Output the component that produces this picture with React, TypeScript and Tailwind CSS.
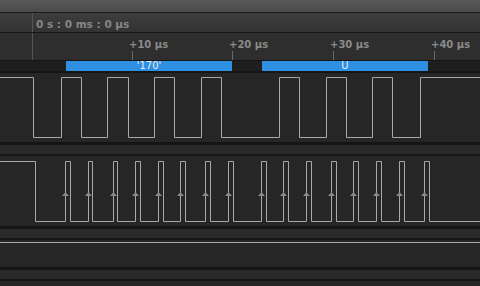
import React from "react";

const font = { fontFamily: '"DejaVu Sans", Verdana, sans-serif' };

// channel 1 edges (x positions where level toggles), starting high
const ch1Edges = [33, 61, 81, 107, 128, 154, 174, 201, 221, 279, 299, 326, 346, 372, 392, 420];
// clock pulses (rising, falling)
const clk: [number, number][] = [
  [65, 70], [88, 92], [113, 117], [135, 140], [158, 163], [180, 185], [205, 210], [228, 233],
  [261, 266], [283, 288], [306, 311], [331, 336], [353, 358], [376, 381], [399, 404], [424, 429],
];

function ch1Path(hi: number, lo: number) {
  let level = true;
  let d = `M0 ${hi}`;
  for (const x of ch1Edges) {
    const y = level ? hi : lo;
    const ny = level ? lo : hi;
    d += ` L${x + 0.5} ${y} L${x + 0.5} ${ny}`;
    level = !level;
  }
  d += ` L480 ${level ? hi : lo}`;
  return d;
}

function clkPath(hi: number, lo: number) {
  let d = `M0 ${hi} L35.5 ${hi} L35.5 ${lo}`;
  for (const [r, f] of clk) {
    d += ` L${r + 0.5} ${lo} L${r + 0.5} ${hi} L${f + 0.5} ${hi} L${f + 0.5} ${lo}`;
  }
  d += ` L480 ${lo}`;
  return d;
}

function Sep() {
  return (
    <div className="flex flex-col">
      <div className="h-[3px] bg-[#151515]" />
      <div className="h-[9px] bg-[#2a2a2a]" />
      <div className="h-[2px] bg-[#151515]" />
    </div>
  );
}

export default function App() {
  const ticks = [
    { x: 132, label: "+10 µs" },
    { x: 232, label: "+20 µs" },
    { x: 333, label: "+30 µs" },
    { x: 434, label: "+40 µs" },
  ];
  return (
    <div className="w-[480px] h-[286px] overflow-hidden bg-[#262626] flex flex-col" style={font}>
      {/* top strip */}
      <div className="h-[13px] bg-gradient-to-b from-[#5a5a5a] to-[#4a4a4a] border-b border-[#1a1a1a] shrink-0" />
      {/* header */}
      <div className="h-[20px] shrink-0 flex bg-gradient-to-b from-[#3d3d3d] to-[#333333] border-b border-[#151515]">
        <div className="w-[33px] border-r border-[#555555]" />
        <div className="pl-[3px] pt-[3px] flex items-center text-[10.5px] font-bold text-[#868686] leading-none">0 s : 0 ms : 0 µs</div>
      </div>
      {/* tick row */}
      <div className="h-[28px] shrink-0 relative flex bg-[#2e2e2e] border-b border-[#151515]">
        <div className="w-[33px] border-r border-[#555555]" />
        {ticks.map((t) => (
          <React.Fragment key={t.x}>
            <div className="absolute top-[7px] text-[10px] font-bold text-[#8a8a8a] leading-none" style={{ left: t.x - 3 }}>
              {t.label}
            </div>
            <div className="absolute top-[18px] bottom-0 w-px bg-[#6a6a6a]" style={{ left: t.x }} />
          </React.Fragment>
        ))}
      </div>
      {/* decoder row */}
      <div className="h-[12px] shrink-0 flex items-start bg-[#1e1e1e] border-b-2 border-[#151515]">
        <div className="w-[66px]" />
        <div className="w-[166px] h-[10px] bg-[#2f8fe0] flex items-center justify-center text-[10px] text-[#e8f0f8] leading-none">'170'</div>
        <div className="w-[30px]" />
        <div className="w-[166px] h-[10px] bg-[#2f8fe0] flex items-center justify-center text-[10px] text-[#e8f0f8] leading-none">U</div>
      </div>
      {/* channel 1 */}
      <div className="h-[69px] shrink-0 bg-[#262626]">
        <svg width="480" height="69" className="block">
          <path d={ch1Path(4.5, 64.5)} fill="none" stroke="#a8a8a8" strokeWidth="1" />
        </svg>
      </div>
      <Sep />
      {/* channel 2 */}
      <div className="h-[70px] shrink-0 bg-[#262626]">
        <svg width="480" height="70" className="block">
          <path d={clkPath(5.5, 65.5)} fill="none" stroke="#a8a8a8" strokeWidth="1" />
          {clk.map(([r]) => (
            <polygon key={r} points={`${r - 3},40 ${r + 4},40 ${r + 0.5},36`} fill="#8a8a8a" />
          ))}
        </svg>
      </div>
      <Sep />
      {/* channel 3 */}
      <div className="h-[27px] shrink-0 bg-[#262626]">
        <svg width="480" height="27" className="block">
          <path d="M0 2.5 L480 2.5" stroke="#a8a8a8" strokeWidth="1" />
        </svg>
      </div>
      <Sep />
    </div>
  );
}
